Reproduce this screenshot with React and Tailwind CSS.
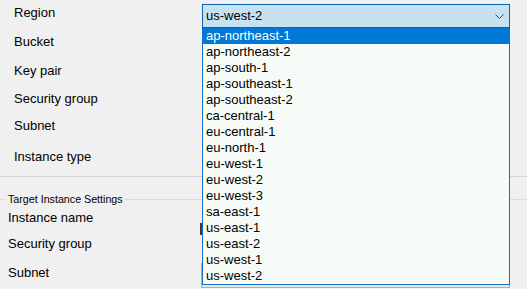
import React from "react";

const regions = [
  "ap-northeast-1",
  "ap-northeast-2",
  "ap-south-1",
  "ap-southeast-1",
  "ap-southeast-2",
  "ca-central-1",
  "eu-central-1",
  "eu-north-1",
  "eu-west-1",
  "eu-west-2",
  "eu-west-3",
  "sa-east-1",
  "us-east-1",
  "us-east-2",
  "us-west-1",
  "us-west-2",
];

// Dropdown popup of the Region combo box
const RegionList = ({ selected }) => (
  <div className="absolute left-[202px] top-[28px] w-[308px] bg-[#f6fbf8] border-x border-b border-[#1470c4]">
    {regions.map((r) => (
      <div
        key={r}
        className={
          r === selected
            ? "h-[16px] leading-[16px] pl-[3px] bg-[#0078d7] text-white"
            : "h-[16px] leading-[16px] pl-[3px] text-black"
        }
      >
        {r}
      </div>
    ))}
  </div>
);

const App = () => {
  return (
    <div className="relative w-[527px] h-[289px] overflow-hidden bg-[#f0f0f0] text-black text-[13px] font-['Liberation_Sans',Arial,sans-serif]">
      {/* Source settings */}
      <div className="flex items-start">
        <div className="w-[202px] pl-[14px] mt-[5px] leading-[16px]">Region</div>
        <div className="mt-[4px] w-[308px] h-[24px] flex items-center justify-between pl-[3px] pr-[5px] bg-[#c6e2f1] border border-[#0a64b0] leading-[16px]">
          <span>us-west-2</span>
          <svg width="9" height="5" viewBox="0 0 9 5" className="mr-[0px]">
            <path d="M0.5 0.5 L4.5 4.5 L8.5 0.5" fill="none" stroke="#444" strokeWidth="1" />
          </svg>
        </div>
      </div>
      <div className="pl-[14px] leading-[16px]">
        <div className="mt-[6px]">Bucket</div>
        <div className="mt-[13px]">Key pair</div>
        <div className="mt-[12px]">Security group</div>
        <div className="mt-[11px]">Subnet</div>
        <div className="mt-[15px]">Instance type</div>
      </div>
      <div className="mt-[11px] h-px bg-[#d5d5d5]" />

      {/* Target group box */}
      <div className="mt-[15px] h-[14px] flex items-start">
        <div className="mt-[7px] w-[6px] h-px bg-[#dcdcdc]" />
        <span className="px-[2px] text-[10.7px] leading-[14px]">Target Instance Settings</span>
        <div className="mt-[7px] flex-1 h-px bg-[#dcdcdc]" />
      </div>
      <div className="flex items-start h-[30px]">
        <div className="w-[200px] pl-[8px] mt-[4px] leading-[16px]">Instance name</div>
        <div className="mt-[17px] w-[310px] h-[12px] bg-white border-l-2 border-[#3a3a3a]" />
      </div>
      <div className="flex items-start h-[27px]">
        <div className="w-[201px] pl-[8px] leading-[16px]">Security group</div>
      </div>
      <div className="flex items-start">
        <div className="w-[201px] pl-[8px] mt-[2px] leading-[16px]">Subnet</div>
        <div className="w-[309px] h-[25px] bg-[#e5e5e5] border border-[#adadad]" />
      </div>

      <RegionList selected="ap-northeast-1" />
    </div>
  );
};

export default App;
